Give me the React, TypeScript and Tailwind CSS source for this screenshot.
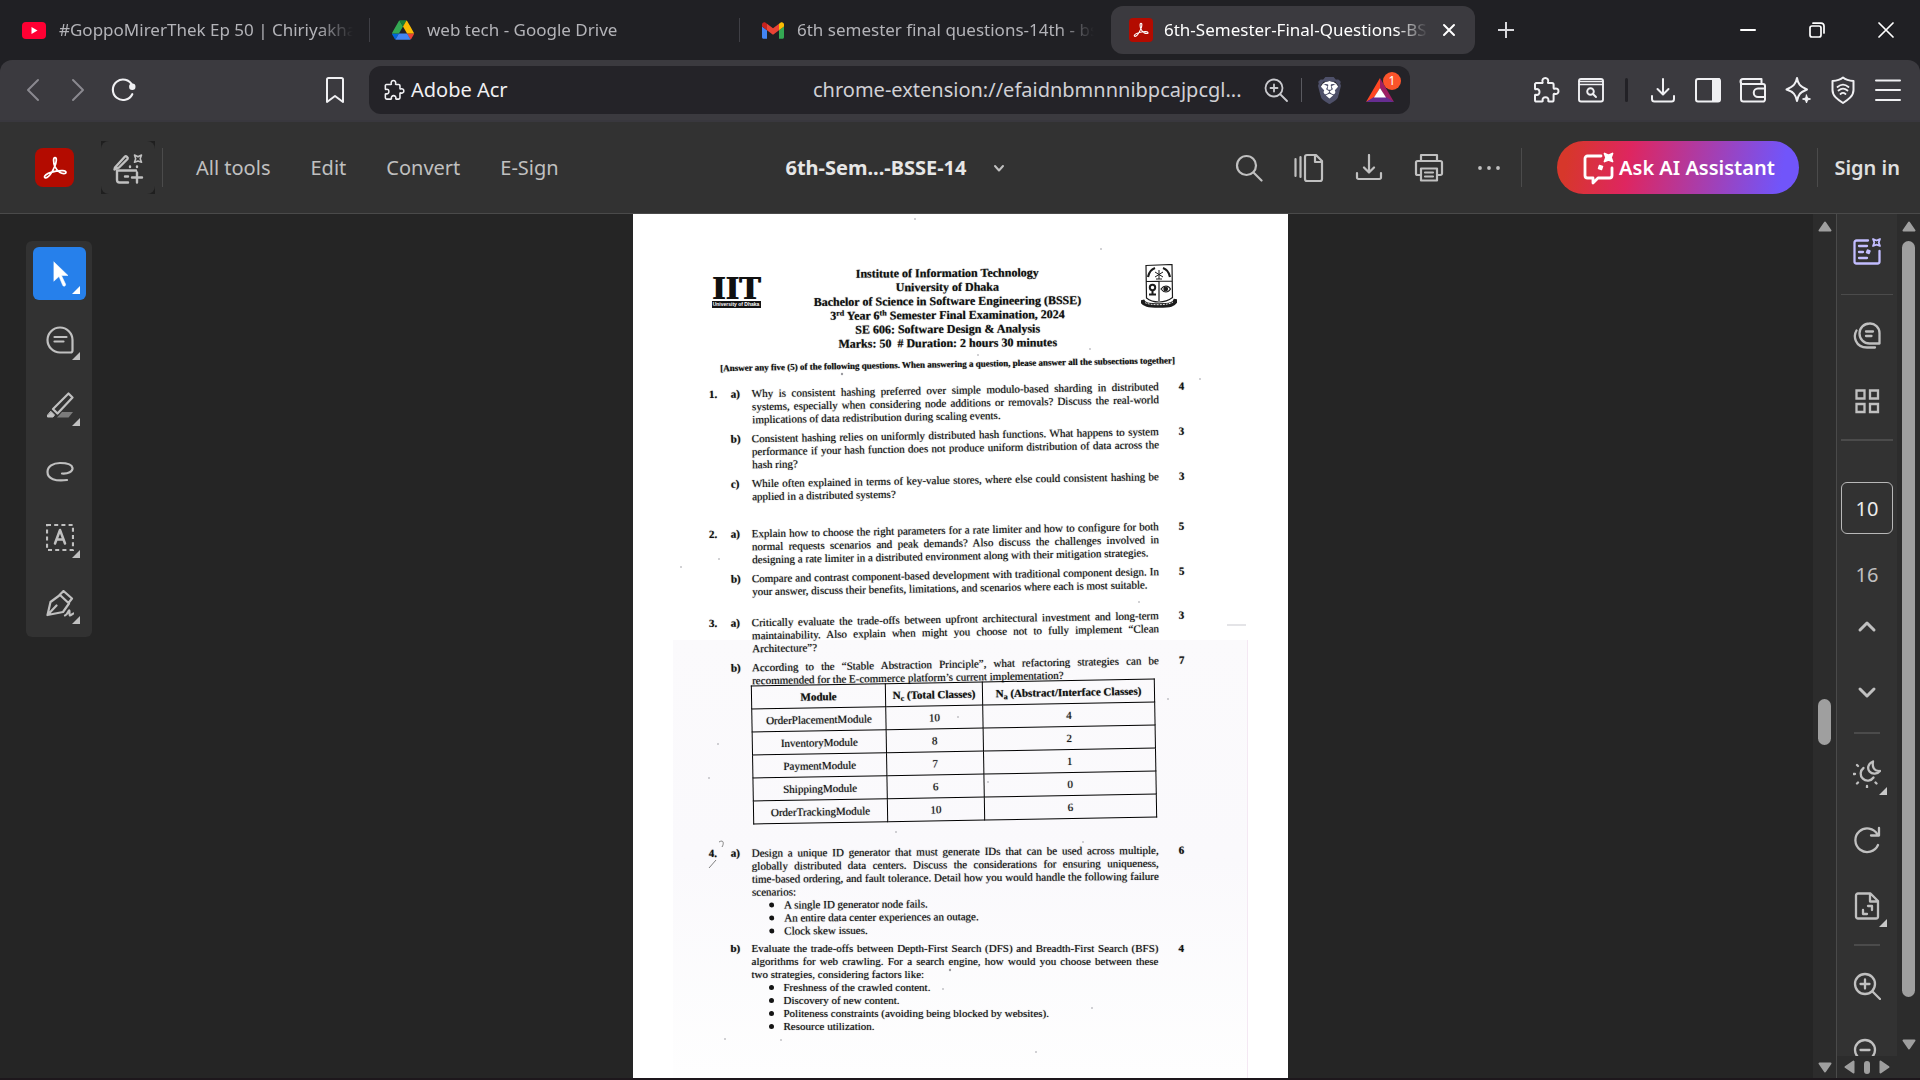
import React from 'react';
import type { ReactNode } from 'react';
import { SiBrave } from 'react-icons/si';

type IconProps = { children: ReactNode; className?: string; sw?: number; vb?: number };

function Ico({ children, className = 'size-7', sw = 2, vb = 28 }: IconProps) {
  return (
    <svg
      viewBox={`0 0 ${vb} ${vb}`}
      className={`shrink-0 ${className}`}
      fill="none"
      stroke="currentColor"
      strokeWidth={sw}
      strokeLinecap="round"
      strokeLinejoin="round"
      aria-hidden="true"
    >
      {children}
    </svg>
  );
}

function Trefoil({ className }: { className: string }) {
  return (
    <Ico className={className} vb={24} sw={1.5}>
      <path d="M11.8 10.5C10.6 7.5 10.3 3 12 3c1.8 0 1.2 4.5-.2 7.5C10.5 13.500 8 18.500 5.500 20c-1.500 1-2.900.3-2.300-1C4.200 17 9 15.300 13 14.600c4-.7 8.200-.7 8.400 1 .1 1.400-2.900 1.600-5.400 0-2-1.300-3.400-3.300-4.200-5.100z" />
    </Ico>
  );
}

function AcrobatLogo({ big = false }: { big?: boolean }) {
  return (
    <span
      className={
        big
          ? 'flex size-[39px] shrink-0 items-center justify-center rounded-lg bg-[#b30b00] text-white'
          : 'flex size-6 shrink-0 items-center justify-center rounded bg-[#b30b00] text-white'
      }
    >
      <Trefoil className={big ? 'size-7' : 'size-[18px]'} />
    </span>
  );
}

function YouTube() {
  return (
    <svg viewBox="0 0 24 17" className="h-[17px] w-6 shrink-0" aria-hidden="true">
      <rect width="24" height="17" rx="4" fill="#ff0033" />
      <path d="M9.500 5v7l6-3.500z" fill="#fff" />
    </svg>
  );
}

function Drive() {
  return (
    <svg viewBox="0 0 87.3 78" className="h-5 w-[22px] shrink-0" aria-hidden="true">
      <path d="m6.6 66.85 3.85 6.65c.8 1.4 1.95 2.5 3.3 3.3l13.75-23.8h-27.5c0 1.55.4 3.1 1.2 4.5z" fill="#0066da" />
      <path d="m43.65 25-13.75-23.8c-1.35.8-2.5 1.9-3.3 3.3l-25.4 44a9.06 9.06 0 0 0-1.2 4.5h27.5z" fill="#34a853" />
      <path d="m73.55 76.8c1.35-.8 2.5-1.9 3.3-3.3l1.6-2.75 7.65-13.25c.8-1.4 1.2-2.95 1.2-4.5h-27.502l5.852 11.5z" fill="#ea4335" />
      <path d="m43.65 25 13.75-23.8c-1.35-.8-2.9-1.2-4.5-1.2h-18.5c-1.6 0-3.15.45-4.5 1.2z" fill="#188038" />
      <path d="m59.8 53h-32.3l-13.75 23.8c1.35.8 2.9 1.2 4.5 1.2h50.8c1.6 0 3.15-.45 4.5-1.2z" fill="#4285f4" />
      <path d="m73.4 26.5-12.7-22c-.8-1.4-1.95-2.5-3.3-3.3l-13.75 23.8 16.15 28h27.45c0-1.55-.4-3.1-1.2-4.5z" fill="#fbbc04" />
    </svg>
  );
}

function Gmail() {
  return (
    <svg viewBox="52 42 88 66" className="h-[17px] w-[22px] shrink-0" aria-hidden="true">
      <path fill="#4285f4" d="M58 108h14V74L52 59v43c0 3.32 2.69 6 6 6" />
      <path fill="#34a853" d="M120 108h14c3.32 0 6-2.69 6-6V59l-20 15" />
      <path fill="#fbbc04" d="M120 48v26l20-15v-8c0-7.42-8.47-11.65-14.4-7.2" />
      <path fill="#ea4335" d="M72 74V48l24 18 24-18v26L96 92" />
      <path fill="#c5221f" d="M52 51v8l20 15V48l-5.6-4.2c-5.94-4.45-14.4-.22-14.4 7.2" />
    </svg>
  );
}

const puzzle = (
  <path d="M4 7h6c.6 0 .8-.5.6-1C9.800 3.700 11.300 2 13.300 2s3.500 1.700 2.700 4c-.2.5 0 1 .6 1H20c1 0 1.600.6 1.600 1.600V12c0 .6.5.9 1 .7 2.200-.8 3.900.6 3.900 2.500s-1.700 3.300-3.900 2.500c-.5-.2-1 .1-1 .7V24c0 1-.6 1.600-1.600 1.600h-3c-.6 0-.8-.5-.7-1 .6-2-.9-3.400-2.800-3.400s-3.400 1.400-2.800 3.400c.1.500-.1 1-.7 1H4.600c-1 0-1.600-.6-1.600-1.600v-4.500c0-.6.400-.9.9-.8 2.200.7 3.600-.7 3.600-2.700S6.100 12.600 3.900 13.300c-.5.1-.9-.2-.9-.8V8z" />
);

function Tab({ icon, title, active = false }: { icon: ReactNode; title: string; active?: boolean }) {
  return (
    <div
      role="tab"
      aria-selected={active}
      className={
        active
          ? 'ml-[1px] mr-[6px] flex h-12 w-[364px] items-center gap-[11px] rounded-xl bg-[#3b3a3f] pl-[18px] pr-4 text-white'
          : 'flex h-6 w-[370px] items-center gap-[13px] border-r border-[#3f3f45] pl-[22px] pr-4 text-[#b3b3b8] nth-3:border-r-0'
      }
    >
      {icon}
      <span className="flex-1 overflow-hidden whitespace-nowrap leading-6 [mask-image:linear-gradient(to_right,black_88%,transparent)]">
        {title}
      </span>
      {active && (
        <button type="button" aria-label="Close tab" className="flex size-5 items-center justify-center">
          <Ico className="size-4" vb={16} sw={2}>
            <path d="M3 3l10 10M13 3L3 13" />
          </Ico>
        </button>
      )}
    </div>
  );
}

function BarButton({ label, children, className = 'w-[45px]' }: { label: string; children: ReactNode; className?: string }) {
  return (
    <button type="button" aria-label={label} className={`flex h-12 shrink-0 items-center justify-center ${className}`}>
      {children}
    </button>
  );
}

function Corner({ className = 'text-[#c8c8c8]' }: { className?: string }) {
  return (
    <svg viewBox="0 0 8 8" className={`absolute bottom-[6px] right-[6px] size-2 ${className}`} aria-hidden="true">
      <path d="M8 0v8H0z" fill="currentColor" />
    </svg>
  );
}

function TabStrip() {
  return (
    <header className="flex h-[60px] shrink-0 items-center bg-[#202024] text-[17px]">
      <div role="tablist" className="flex min-w-0 items-center">
        <Tab icon={<YouTube />} title="#GoppoMirerThek Ep 50 | Chiriyakhan" />
        <Tab icon={<Drive />} title="web tech - Google Drive" />
        <Tab icon={<Gmail />} title="6th semester final questions-14th - bs" />
        <Tab active icon={<AcrobatLogo />} title="6th-Semester-Final-Questions-BS" />
      </div>
      <BarButton label="New tab" className="w-[50px] text-[#d8d8dc]">
        <Ico className="size-4" vb={16}>
          <path d="M8 0v16M0 8h16" />
        </Ico>
      </BarButton>
      <div className="ml-auto flex text-white">
        <BarButton label="Minimize" className="w-[69px]">
          <Ico className="size-4" vb={16}>
            <path d="M1 8h14" />
          </Ico>
        </BarButton>
        <BarButton label="Restore" className="w-[69px]">
          <Ico className="size-4" vb={16} sw={1.7}>
            <rect x="1" y="4" width="11" height="11" rx="2" />
            <path d="M4 1.200h8A3 3 0 0 1 15 4v7" />
          </Ico>
        </BarButton>
        <BarButton label="Close" className="w-[69px]">
          <Ico className="size-4" vb={16} sw={1.7}>
            <path d="M1 1l14 14M15 1L1 15" />
          </Ico>
        </BarButton>
      </div>
    </header>
  );
}

function AddressBar() {
  return (
    <nav className="flex h-[60px] shrink-0 items-center rounded-t-xl bg-[#3b3a3f] text-[#f0f0f3]">
      <div className="flex w-[369px] shrink-0 items-center pl-[10px]">
        <BarButton label="Back" className="w-[45px] text-[#8a898f]">
          <Ico className="size-6" vb={24}>
            <path d="M17 2L7 12l10 10" />
          </Ico>
        </BarButton>
        <BarButton label="Forward" className="w-[45px] text-[#8a898f]">
          <Ico className="size-6" vb={24}>
            <path d="M7 2l10 10L7 22" />
          </Ico>
        </BarButton>
        <BarButton label="Reload">
          <Ico className="size-[26px]" sw={2.3}>
            <path d="M24 18.500A11 11 0 1 1 24 9" />
            <circle cx="24" cy="10.500" r="2.300" fill="currentColor" />
          </Ico>
        </BarButton>
        <BarButton label="Bookmark" className="ml-auto mr-3 w-[45px]">
          <Ico>
            <path d="M6 3.500A1.500 1.500 0 0 1 7.500 2h13A1.500 1.500 0 0 1 22 3.500V26l-8-6-8 6z" />
          </Ico>
        </BarButton>
      </div>
      <div className="flex h-12 min-w-0 flex-1 items-center rounded-xl bg-[#242328] text-xl">
        <button type="button" className="flex w-[444px] items-center gap-[6px] pl-[14px]">
          <Ico className="size-[22px]">{puzzle}</Ico>
          <span className="whitespace-nowrap">Adobe Acr</span>
        </button>
        <input
          aria-label="Address"
          defaultValue="chrome-extension://efaidnbmnnnibpcajpcgl..."
          className="min-w-0 flex-1 bg-transparent text-[#d0d0d5] outline-none"
        />
        <BarButton label="Zoom" className="w-[38px] text-[#c9c9ce]">
          <Ico className="size-6" vb={24} sw={1.8}>
            <circle cx="10" cy="10" r="8.500" />
            <path d="M16.500 16.500L23 23M10 6.500v7M6.500 10h7" />
          </Ico>
        </BarButton>
        <span className="mx-[6px] h-6 w-px bg-[#5a5a60]" />
        <BarButton label="Brave Shields" className="w-[42px]">
          <span className="relative flex text-[#4e5069]">
            <span className="absolute inset-x-1 inset-y-1 rounded-full bg-white" />
            <SiBrave className="relative size-[27px]" />
          </span>
        </BarButton>
        <BarButton label="Brave Rewards" className="relative w-[60px]">
          <svg viewBox="0 0 28 24" className="h-6 w-7" aria-hidden="true">
            <path d="M14 0L0 24l8-4 6-10z" fill="#ff4724" />
            <path d="M14 0l14 24-8-4-6-10z" fill="#9e1f63" />
            <path d="M0 24h28l-8-5H8z" fill="#662d91" />
            <path d="M14 10l-6 9.500h12z" fill="#fff" />
          </svg>
          <span className="absolute right-[9px] top-[6px] flex h-[18px] w-[18px] items-center justify-center rounded-full bg-[#fb542b] text-xs text-white">
            1
          </span>
        </BarButton>
      </div>
      <div className="flex shrink-0 items-center pl-[113px] pr-[10px]">
        <BarButton label="Extensions">
          <Ico sw={2}>{puzzle}</Ico>
        </BarButton>
        <BarButton label="Search page">
          <Ico sw={1.900}>
            <rect x="2" y="3" width="24" height="22.500" rx="2" />
            <path d="M2 5.500h24M2 8.500h24" strokeWidth="1.600" />
            <circle cx="13.500" cy="15.500" r="3.300" />
            <path d="M16 18l3 3" />
          </Ico>
        </BarButton>
        <span className="mx-3 h-6 w-[3px] rounded bg-[#222126]" />
        <BarButton label="Downloads">
          <Ico>
            <path d="M14 3v15M8.500 13l5.500 5.500 5.500-5.500M3 20v3a2.500 2.500 0 0 0 2.500 2.500h17A2.500 2.500 0 0 0 25 23v-3" />
          </Ico>
        </BarButton>
        <BarButton label="Sidebar">
          <Ico>
            <rect x="2" y="3" width="24" height="22.500" rx="2" />
            <path d="M19 3h6v22h-6z" fill="currentColor" />
          </Ico>
        </BarButton>
        <BarButton label="Wallet">
          <Ico>
            <path d="M2 6v17a2.500 2.500 0 0 0 2.500 2.500h19A2 2 0 0 0 26 23.500V10a2 2 0 0 0-2-2H4a2.300 2.300 0 0 1 0-5h18.500v4.500M26 12.500h-7a4 4 0 0 0 0 8.500h7" />
          </Ico>
        </BarButton>
        <BarButton label="Leo AI">
          <Ico>
            <path d="M13 2c1 6 2.500 8 10 11.500-7 3-8.500 4.500-10 11.500-1.500-7-3.500-9-10.500-11.500C10 10 11.800 8 13 2z" />
            <path d="M22.500 19l1 3 3 1-3 1-1 3-1-3-3-1 3-1z" fill="currentColor" strokeWidth="1" />
          </Ico>
        </BarButton>
        <BarButton label="VPN">
          <Ico>
            <path d="M14 1.500c3 2.500 6 3.200 10.500 3.500v9c0 6-5 9.500-10.500 13C8.500 23.500 3.500 20 3.500 14V5C8 4.700 11 4 14 1.500z" />
            <path d="M8.500 11c3.500-3 7.500-3 11 0M9.500 14.500c3-2.500 6-2.500 9 0M11.500 18c1.600-1.400 3.400-1.400 5 0" strokeWidth="1.800" />
          </Ico>
        </BarButton>
        <BarButton label="Menu">
          <Ico>
            <path d="M2 4.500h24M2 14h24M2 24h24" />
          </Ico>
        </BarButton>
      </div>
    </nav>
  );
}

function AcrobatBar() {
  return (
    <div className="flex h-[94px] shrink-0 items-center border-b border-t-2 border-b-[#4a4a4a] border-t-[#39383e] bg-[#323232] text-xl text-[#c0c0c0]">
      <div className="flex min-w-0 flex-1 items-center">
        <span className="pl-[35px]">
          <AcrobatLogo big />
        </span>
        <button
          type="button"
          aria-label="Edit with AI"
          className="ml-[27px] flex h-[53px] w-[54px] shrink-0 items-center justify-center bg-[#1f1f1f]"
        >
          <span className="flex size-full items-center justify-center rounded-lg bg-[#323232]">
            <Ico className="size-8" vb={32} sw={2.4}>
              <path d="M3 15.500L13 4.500c1-1 3.500 1 2.500 2.500L7 15.500l-4.500 2z" />
              <path d="M5 18.500V28a2.500 2.500 0 0 0 2.500 2.500H16M5 18.500h19M13 24.500h3M25 20.500v10M20 25.500h10" />
              <path d="M22.500 3l3.500 1.800L29.500 3l-1.300 3.700 1.300 3.500L26 9l-3.500 1.200 1.200-3.500z" strokeWidth="1.600" />
              <path d="M18 14.500v.5M25 14.500v.5" />
            </Ico>
          </span>
        </button>
        <span className="ml-[7px] h-[39px] w-px shrink-0 bg-[#4b4b4b]" />
        <div className="flex gap-10 whitespace-nowrap pl-[33px]">
          <button type="button">All tools</button>
          <button type="button">Edit</button>
          <button type="button">Convert</button>
          <button type="button">E-Sign</button>
        </div>
      </div>
      <div className="w-[434px] shrink-0">
        <button type="button" className="flex items-center gap-[26px] font-bold text-[#e6e6e6]">
          6th-Sem...-BSSE-14
          <Ico className="size-3 text-[#c0c0c0]" vb={12} sw={2}>
            <path d="M2 4l4 4.500L10 4" />
          </Ico>
        </button>
      </div>
      <div className="flex shrink-0 items-center pr-5">
        <BarButton label="Search" className="w-[60px]">
          <Ico sw={2.2}>
            <circle cx="11.500" cy="11.500" r="9.500" />
            <path d="M18.500 18.500l8 8" />
          </Ico>
        </BarButton>
        <BarButton label="Pages" className="w-[60px]">
          <Ico className="size-[30px]" vb={30} sw={2.2}>
            <path d="M1.500 6v17M6.500 4v20M13.500 2H22l6 6v18a2 2 0 0 1-2 2H13a2 2 0 0 1-2-2V4a2 2 0 0 1 2-2zM21 2.500V9h6.500" />
          </Ico>
        </BarButton>
        <BarButton label="Download" className="w-[60px]">
          <Ico sw={2.2}>
            <path d="M14 1v17M9 13.500l5 5 5-5M2 19v4.500A1.500 1.500 0 0 0 3.500 25h21a1.500 1.500 0 0 0 1.500-1.500V19" />
          </Ico>
        </BarButton>
        <BarButton label="Print" className="w-[60px]">
          <Ico className="size-[30px]" vb={30} sw={2.2}>
            <path d="M7 8V2h16v6M7 22H3.500A1.500 1.500 0 0 1 2 20.500v-11A1.500 1.500 0 0 1 3.500 8h23A1.500 1.500 0 0 1 28 9.500v11a1.500 1.500 0 0 1-1.500 1.500H23M7 15.500h16v12H7zM11 19.500h8M11 23.500h8" />
          </Ico>
        </BarButton>
        <BarButton label="More" className="w-[60px]">
          <svg viewBox="0 0 24 6" className="h-[6px] w-6" fill="currentColor" aria-hidden="true">
            <circle cx="3" cy="3" r="1.900" />
            <circle cx="12" cy="3" r="1.900" />
            <circle cx="21" cy="3" r="1.900" />
          </svg>
        </BarButton>
        <span className="ml-[2px] h-[39px] w-px bg-[#4b4b4b]" />
        <button
          type="button"
          className="ml-[35px] flex h-[53px] w-[242px] items-center justify-center gap-[3px] whitespace-nowrap rounded-full bg-[linear-gradient(100deg,#d7372b_5%,#de2660_30%,#7155fa_92%)] font-semibold text-white"
        >
          <Ico className="size-[34px]" vb={34} sw={2.8}>
            <path d="M19 5H5.500A2.500 2.500 0 0 0 3 7.500v17A2.500 2.500 0 0 0 5.500 27H11v5l5-5h11.500a2.500 2.500 0 0 0 2.500-2.500V17" />
            <path d="M22.500 2.500l4 1.800 4-1.800L29 6.500l1.500 4-4-1.500-4 1.500 1.500-4z" fill="currentColor" strokeWidth="1.800" />
            <path d="M17.500 14.500l3 1-1 3-3-1z" fill="currentColor" strokeWidth="1.500" />
          </Ico>
          Ask AI Assistant
        </button>
        <span className="ml-[18px] h-[39px] w-px bg-[#4b4b4b]" />
        <a href="#signin" className="whitespace-nowrap pl-4 font-semibold text-[#e0e0e0]">
          Sign in
        </a>
      </div>
    </div>
  );
}

const tools: { label: string; icon: ReactNode; corner: boolean }[] = [
  {
    label: 'Select',
    corner: true,
    icon: <path d="M8 2l14 13.500h-6.500l4 8.500a1.500 1.500 0 0 1-2.800 1.300L13 16.500 8 21z" fill="currentColor" strokeWidth="0.500" />,
  },
  {
    label: 'Comment',
    corner: true,
    icon: <path d="M14 1.500A12.500 12.500 0 0 0 14 26.500h10.500A2 2 0 0 0 26.500 24.500V14A12.500 12.500 0 0 0 14 1.500zM8.500 11h12M8.500 15.500h9" />,
  },
  {
    label: 'Highlight',
    corner: true,
    icon: (
      <>
        <path d="M22.500 1.500l4 4-15 16-4.500-4.500z" />
        <path d="M5 19.500l3.500 3.500-1.500 2H1.500v-1.500z" fill="currentColor" strokeWidth="1" />
        <path d="M16 20h11l-4.500 5.500H11z" fill="#7b7b7b" stroke="none" />
      </>
    ),
  },
  {
    label: 'Draw',
    corner: false,
    icon: <path d="M16 15.500c6 .5 11-2 10.500-5.500S20 5 14 5C7 5 1.500 8.500 1.500 14c0 7 8 9.500 19.500 8" />,
  },
  {
    label: 'Add text',
    corner: true,
    icon: (
      <>
        <path d="M1 1h26v25H1z" strokeDasharray="4 3.200" strokeLinecap="butt" strokeLinejoin="miter" />
        <path d="M9 19.500l5-13.500L19 19.500M10.500 15.500h7" strokeWidth="2.500" />
      </>
    ),
  },
  {
    label: 'Sign',
    corner: true,
    icon: (
      <path d="M1.500 25l3-13L14 5l9 8.500L17 22zM1.500 25l9-9.500M13 5.500L17.500 1l8.500 7.500-3.500 4.500M19 25.500c2-.5 3-4 4-5s0 5 1 5 2-1.500 3.500-2" />
    ),
  },
];

function Tools() {
  return (
    <div className="ml-[26px] mt-[27px] flex w-[66px] flex-col gap-[13px] self-start rounded-md bg-[#323232] px-[7px] pb-[7px] pt-[6px]">
      {tools.map((t, i) => (
        <button
          key={t.label}
          type="button"
          aria-label={t.label}
          aria-pressed={i === 0}
          className={
            i === 0
              ? 'relative flex size-[53px] items-center justify-center rounded-md bg-[#2680eb] text-white'
              : 'relative flex size-[53px] items-center justify-center rounded-md text-[#c0c0c0]'
          }
        >
          <Ico sw={2.2}>{t.icon}</Ico>
          {t.corner && <Corner className="text-current" />}
        </button>
      ))}
    </div>
  );
}

function SideButton({ label, children, corner = false }: { label: string; children: ReactNode; corner?: boolean }) {
  return (
    <button type="button" aria-label={label} className="relative flex h-[54px] w-[52px] shrink-0 items-center justify-center">
      <Ico sw={2.300}>{children}</Ico>
      {corner && <Corner />}
    </button>
  );
}

function Arrow({ dir }: { dir: 'up' | 'down' | 'left' | 'right' }) {
  const turn = { up: 'rotate-0', down: 'rotate-180', left: '-rotate-90', right: 'rotate-90' }[dir];
  return (
    <button type="button" aria-label={`Scroll ${dir}`} className={`flex h-3 w-[14px] shrink-0 items-center justify-center ${turn}`}>
      <svg viewBox="0 0 14 11" className="h-[11px] w-[14px]" aria-hidden="true">
        <path d="M7 1.500L12.500 9.500H1.500z" fill="#9f9f9f" stroke="#9f9f9f" strokeWidth="2" strokeLinejoin="round" />
      </svg>
    </button>
  );
}

function SidePanel() {
  return (
    <aside className="flex w-[60px] shrink-0 flex-col">
      <div className="flex min-h-0 flex-1 flex-col items-center overflow-hidden bg-[#323232] pt-[10px] text-xl text-[#c0c0c0]">
        <div className="text-[#c2bdff]">
          <SideButton label="AI summary">
            <path d="M15 3.500H3.500a2 2 0 0 0-2 2v19a2 2 0 0 0 2 2h21a2 2 0 0 0 2-2V14M6 9h8M6 15h4M6 21h8" />
            <path d="M20 2l3.500 1.500L27 2l-1.300 3.500L27 9l-3.500-1.300L20 9l1.300-3.500z" strokeWidth="1.800" />
            <path d="M14.500 13l2.500 1-1 2.500-2.500-1z" fill="currentColor" strokeWidth="1.500" />
          </SideButton>
        </div>
        <hr className="mb-[14px] mt-4 w-[52px] shrink-0 border-[#4b4b4b]" />
        <SideButton label="Comments">
          <path d="M16.500 1.500a9.500 9.500 0 0 0 0 20h10V11a9.500 9.500 0 0 0-10-9.500zM13 9.500h7M13 14h5.500M3.500 8.500C0 14 2 25.500 14 25.500h8" />
        </SideButton>
        <div className="h-[11px] shrink-0" />
        <SideButton label="Thumbnails">
          <path d="M3.500 3.500h8v8h-8zM17 3.500h8v8h-8zM3.500 17h8v8h-8zM17 17h8v8h-8z" strokeLinejoin="miter" />
        </SideButton>
        <hr className="mt-[11px] w-[52px] shrink-0 border-t-2 border-[#4b4b4b]" />
        <input
          aria-label="Page number"
          defaultValue="10"
          className="mt-[41px] size-[52px] shrink-0 rounded-md border border-[#b8b8b8] bg-transparent text-center text-[#ececec] outline-none"
        />
        <span className="mt-[26px] shrink-0 leading-[30px]">16</span>
        <div className="mt-[10px] flex flex-col gap-3">
          <SideButton label="Previous page">
            <path d="M7 17l7-7 7 7" strokeWidth="3" />
          </SideButton>
          <SideButton label="Next page">
            <path d="M7 10l7 7 7-7" strokeWidth="3" />
          </SideButton>
        </div>
        <hr className="mb-[13px] mt-3 w-[26px] shrink-0 border-t-2 border-[#4b4b4b]" />
        <div className="flex flex-col gap-3">
          <SideButton label="Display theme" corner>
            <path d="M10.500 8a7 7 0 1 0 10 9.500" />
            <path d="M20 1.500c-5 2-6 7-3.500 10 3 3.500 8 2.500 10.500-.5-6 .5-8-4-7-9.500z" />
            <path d="M.5 14h1.500M4 23.500l1-1M14 26v1.500M23.500 23.500l-1-1M4 5l1 1" />
          </SideButton>
          <SideButton label="Rotate">
            <path d="M25 19A11.800 11.800 0 1 1 24.500 8.500M26 2v7.500h-8" />
          </SideButton>
          <SideButton label="Fit page" corner>
            <path d="M5 1.500h12.500l7.500 7.500v15.500a2 2 0 0 1-2 2H5a2 2 0 0 1-2-2v-21a2 2 0 0 1 2-2zM17 2v7.500h7.500M15 14h4v4M14 22h-4v-4" />
          </SideButton>
        </div>
        <hr className="mb-[13px] mt-[11px] w-[26px] shrink-0 border-t-2 border-[#4b4b4b]" />
        <div className="flex flex-col gap-3">
          <SideButton label="Zoom in">
            <circle cx="12" cy="12" r="10" />
            <path d="M19.500 19.500l7.500 7.500M12 7.500v9M7.500 12h9" />
          </SideButton>
          <SideButton label="Zoom out">
            <circle cx="12" cy="12" r="10" />
            <path d="M19.500 19.500l7.500 7.500M7.500 12h9" />
          </SideButton>
        </div>
      </div>
      <div className="flex h-[22px] shrink-0 items-center justify-center gap-2 bg-[#2c2c2c]">
        <Arrow dir="left" />
        <span className="h-[13px] w-[6px] rounded-full bg-[#9f9f9f]" />
        <Arrow dir="right" />
      </div>
    </aside>
  );
}

type ItemProps = {
  no?: string;
  letter: string;
  lines: string[];
  mark: string;
  last?: string;
  tilt?: string;
  className: string;
  bullets?: string[];
};

function Item({ no = '', letter, lines, mark, last, tilt = '-rotate-1', className, bullets }: ItemProps) {
  return (
    <div className={`flex ${tilt} ${className}`}>
      <span className="w-[22px] shrink-0 font-bold">{no}</span>
      <span className="w-[21px] shrink-0 font-bold">{letter}</span>
      <div className="w-[407px] shrink-0 whitespace-nowrap">
        {lines.map((l) => (
          <p key={l} className="text-justify [text-align-last:justify]">
            {l}
          </p>
        ))}
        {last && <p>{last}</p>}
        {bullets && (
          <ul className="pl-[17px]">
            {bullets.map((b) => (
              <li key={b} className="flex items-center gap-[10px]">
                <span className="size-[5px] rounded-full bg-[#151515]" />
                {b}
              </li>
            ))}
          </ul>
        )}
      </div>
      <span className="pl-5 font-bold">{mark}</span>
    </div>
  );
}

const modules: [string, number, number][] = [
  ['OrderPlacementModule', 10, 4],
  ['InventoryModule', 8, 2],
  ['PaymentModule', 7, 1],
  ['ShippingModule', 6, 0],
  ['OrderTrackingModule', 10, 6],
];

function Crest() {
  return (
    <svg viewBox="0 0 36 44" className="-mt-[3px] h-11 w-9 justify-self-end" fill="none" stroke="#1c1c1c" strokeWidth="1.200" aria-hidden="true">
      <path d="M5 1.500L31 .5l.5 33C27 37 22 38 18 38S9 37 5.500 34zM5 17.500l26-.5M18 17.500V37" />
      <path d="M7 13c1-5 4-8 7-9M29 13c-1-5-4-8-7-9" strokeWidth="2.200" />
      <path d="M18 6v9M14 8l8 5M22 8l-8 5M15 15h6" strokeWidth="1" />
      <circle cx="11.500" cy="23.500" r="2.700" strokeWidth="2" />
      <path d="M8 30.500h7M11.500 27v4" strokeWidth="2" />
      <path d="M20 25c3-4 7-4 9.500 0-2.500 4-6.500 4-9.500 0z" />
      <circle cx="24.700" cy="25" r="1.800" fill="#1c1c1c" />
      <path d="M1 36c1 5 7 5.500 17 5.500S34 41 35 35" strokeWidth="4.500" />
      <path d="M4 38.500c4 3 24 3 28-.5" stroke="#ddd" strokeWidth="1" strokeDasharray="2 1" />
    </svg>
  );
}

const specks: [number, number, number][] = [
  [282, 5, 1], [468, 35, 1], [457, 135, 1], [345, 141, 1], [209, 160, 1.5], [567, 165, 1], [48, 353, 1], [86, 345, 1],
  [506, 388, 1], [535, 485, 1], [85, 530, 1], [76, 564, 1], [325, 503, 1], [355, 568, 1], [263, 618, 1], [450, 628, 1],
  [317, 756, 1.5], [310, 775, 1], [148, 826, 1], [403, 838, 1], [92, 825, 1], [459, 794, 1],
];

function ExamPage() {
  return (
    <article className="relative h-full overflow-hidden bg-white pt-[53px] font-['Liberation_Serif',serif] text-[11px] leading-[13px] text-[#101010] [text-shadow:0_0_1px_#10101099]">
      <div className="pointer-events-none absolute bottom-0 left-10 right-10 top-[426px] border-r border-[#f4e8f3] bg-gradient-to-b from-[#fbfafc] via-[#faf9fc] to-[#fefefe]" />
      <svg className="pointer-events-none absolute inset-0 size-full" fill="#9a9a9f" aria-hidden="true">
        {specks.map(([x, y, r]) => (
          <circle key={`${x}-${y}`} cx={x} cy={y} r={r * 0.8} />
        ))}
        <path d="M86 628c5-3 5 2 3 5M83 646l-7 8" fill="none" stroke="#808080" />
        <path d="M594 411h19" stroke="#c9c9cf" />
      </svg>
      <div className="relative">
        <div className="grid grid-cols-[48px_1fr_42px] pl-[79px] pr-[111px]">
          <div className="mt-[9px] flex w-[49px] flex-col">
            <span className="h-[25px] text-center font-['DejaVu_Serif',serif] text-[29px] font-bold leading-[26px] [text-shadow:1px_0_0_#101010]">
              IIT
            </span>
            <span className="flex h-[7px] items-center justify-center whitespace-nowrap bg-[#151515] font-['Liberation_Sans',sans-serif] text-[5px] font-bold leading-none text-white">
              University of Dhaka
            </span>
          </div>
          <h1 className="-mt-px rotate-[-0.4deg] text-center text-xs font-bold leading-[14px]">
            Institute of Information Technology
            <br />
            University of Dhaka
            <br />
            Bachelor of Science in Software Engineering (BSSE)
            <br />3<sup className="text-[8px] leading-none">rd</sup> Year 6<sup className="text-[8px] leading-none">th</sup> Semester Final Examination, 2024
            <br />
            SE 606: Software Design &amp; Analysis
            <br />
            Marks: 50 &nbsp;# Duration: 2 hours 30 minutes
          </h1>
          <Crest />
        </div>
        <p className="mt-[7px] -rotate-1 whitespace-nowrap pr-[26px] text-center text-[9px] font-bold leading-[14px]">
          [Answer any five (5) of the following questions. When answering a question, please answer all the subsections together]
        </p>
        <div className="pl-[76px]">
          <Item
            className="mt-3" no="1." letter="a)" mark="4"
            lines={[
              'Why is consistent hashing preferred over simple modulo-based sharding in distributed',
              'systems, especially when considering node additions or removals? Discuss the real-world',
            ]}
            last="implications of data redistribution during scaling events."
          />
          <Item
            className="mt-[6px]" letter="b)" mark="3"
            lines={[
              'Consistent hashing relies on uniformly distributed hash functions. What happens to system',
              'performance if your hash function does not produce uniform distribution of data across the',
            ]}
            last="hash ring?"
          />
          <Item
            className="mt-[6px]" letter="c)" mark="3"
            lines={['While often explained in terms of key-value stores, where else could consistent hashing be']}
            last="applied in a distributed systems?"
          />
          <Item
            className="mt-6" no="2." letter="a)" mark="5"
            lines={[
              'Explain how to choose the right parameters for a rate limiter and how to configure for both',
              'normal requests scenarios and peak demands? Also discuss the challenges involved in',
            ]}
            last="designing a rate limiter in a distributed environment along with their mitigation strategies."
          />
          <Item
            className="mt-[6px]" letter="b)" mark="5"
            lines={['Compare and contrast component-based development with traditional component design. In']}
            last="your answer, discuss their benefits, limitations, and scenarios where each is most suitable."
          />
          <Item
            className="mt-[18px]" no="3." letter="a)" mark="3"
            lines={[
              'Critically evaluate the trade-offs between upfront architectural investment and long-term',
              'maintainability. Also explain when might you choose not to fully implement “Clean',
            ]}
            last="Architecture”?"
          />
          <Item
            className="mt-[6px]" letter="b)" mark="7"
            lines={['According to the “Stable Abstraction Principle”, what refactoring strategies can be']}
            last="recommended for the E-commerce platform’s current implementation?"
          />
          <table className="-mt-px ml-[43px] w-[404px] -rotate-1 table-fixed border-collapse text-center">
            <thead>
              <tr className="h-[23px]">
                <th className="w-[134px] border border-black">Module</th>
                <th className="w-[97px] whitespace-nowrap border border-black">
                  N<sub className="text-[8px] leading-none">c</sub> (Total Classes)
                </th>
                <th className="border border-black">
                  N<sub className="text-[8px] leading-none">a</sub> (Abstract/Interface Classes)
                </th>
              </tr>
            </thead>
            <tbody>
              {modules.map(([name, total, abs]) => (
                <tr key={name} className="h-[23px]">
                  <td className="border border-black">{name}</td>
                  <td className="border border-black">{total}</td>
                  <td className="border border-black">{abs}</td>
                </tr>
              ))}
            </tbody>
          </table>
          <Item
            className="mt-6" no="4." letter="a)" mark="6" tilt="rotate-[-0.4deg]"
            lines={[
              'Design a unique ID generator that must generate IDs that can be used across multiple,',
              'globally distributed data centers. Discuss the considerations for ensuring uniqueness,',
              'time-based ordering, and fault tolerance. Detail how you would handle the following failure',
            ]}
            last="scenarios:"
            bullets={['A single ID generator node fails.', 'An entire data center experiences an outage.', 'Clock skew issues.']}
          />
          <Item
            className="mt-[6px]" letter="b)" mark="4" tilt="rotate-0"
            lines={[
              'Evaluate the trade-offs between Depth-First Search (DFS) and Breadth-First Search (BFS)',
              'algorithms for web crawling. For a search engine, how would you choose between these',
            ]}
            last="two strategies, considering factors like:"
            bullets={[
              'Freshness of the crawled content.',
              'Discovery of new content.',
              'Politeness constraints (avoiding being blocked by websites).',
              'Resource utilization.',
            ]}
          />
        </div>
      </div>
    </article>
  );
}

export default function App() {
  return (
    <div className="flex h-screen flex-col overflow-hidden bg-[#202024] font-['Noto_Sans',sans-serif]">
      <TabStrip />
      <AddressBar />
      <AcrobatBar />
      <main className="grid min-h-0 flex-1 grid-cols-[1fr_655px_1fr] grid-rows-[minmax(0,1fr)] border-b-2 border-[#1d171c] bg-[#252525]">
        <Tools />
        <ExamPage />
        <div className="flex justify-end">
          <div className="flex w-6 shrink-0 flex-col items-center border-r border-[#4a4a4a] bg-[#2c2c2c] pb-1 pt-[6px]">
            <Arrow dir="up" />
            <span className="mt-[467px] h-[46px] w-[13px] rounded-full bg-[#9f9f9f]" />
            <span className="flex-1" />
            <Arrow dir="down" />
          </div>
          <SidePanel />
          <div className="flex w-[23px] shrink-0 flex-col items-center bg-[#2c2c2c] pb-[27px] pt-[6px]">
            <Arrow dir="up" />
            <span className="mb-[42px] mt-[9px] w-[13px] flex-1 rounded-full bg-[#9f9f9f]" />
            <Arrow dir="down" />
          </div>
        </div>
      </main>
    </div>
  );
}
